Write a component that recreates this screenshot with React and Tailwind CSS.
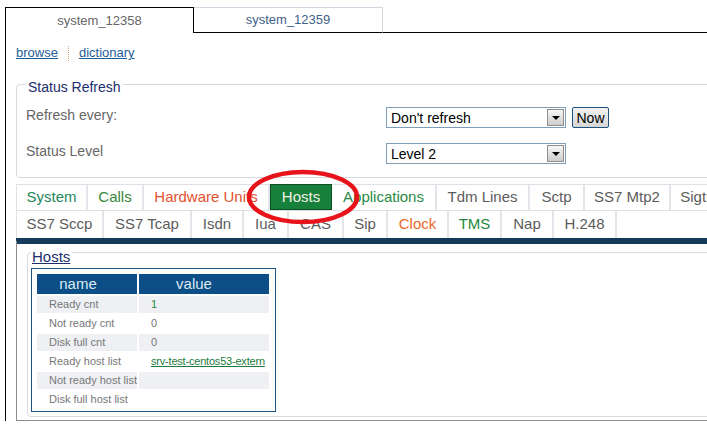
import React from 'react';

const row1 = [
  { label: 'System', w: 'w-[71px]', color: 'text-[#25875a]' },
  { label: 'Calls', w: 'w-[56px]', color: 'text-[#35883a]' },
  { label: 'Hardware Units', w: 'w-[126px]', color: 'text-[#e2512d]' },
  { label: 'Hosts', active: true },
  { label: 'Applications', w: 'w-[105px]', color: 'text-[#2a8a45]' },
  { label: 'Tdm Lines', w: 'w-[93px]', color: 'text-[#5c5c5c]' },
  { label: 'Sctp', w: 'w-[55px]', color: 'text-[#5c5c5c]' },
  { label: 'SS7 Mtp2', w: 'w-[86px]', color: 'text-[#5c5c5c]' },
  { label: 'Sigtran', w: 'w-[68px]', color: 'text-[#5c5c5c]' },
];

const row2 = [
  { label: 'SS7 Sccp', w: 'w-[87px]', color: 'text-[#5c5c5c]' },
  { label: 'SS7 Tcap', w: 'w-[88px]', color: 'text-[#5c5c5c]' },
  { label: 'Isdn', w: 'w-[52px]', color: 'text-[#5c5c5c]' },
  { label: 'Iua', w: 'w-[45px]', color: 'text-[#5c5c5c]' },
  { label: 'CAS', w: 'w-[55px]', color: 'text-[#5c5c5c]' },
  { label: 'Sip', w: 'w-[44px]', color: 'text-[#5c5c5c]' },
  { label: 'Clock', w: 'w-[61px]', color: 'text-[#e8682a]' },
  { label: 'TMS', w: 'w-[53px]', color: 'text-[#23873c]' },
  { label: 'Nap', w: 'w-[52px]', color: 'text-[#5c5c5c]' },
  { label: 'H.248', w: 'w-[63px]', color: 'text-[#5c5c5c]' },
];

const hosts = [
  { name: 'Ready cnt', value: '1', kind: 'green' },
  { name: 'Not ready cnt', value: '0' },
  { name: 'Disk full cnt', value: '0' },
  { name: 'Ready host list', value: 'srv-test-centos53-extern', kind: 'link' },
  { name: 'Not ready host list', value: '' },
  { name: 'Disk full host list', value: '' },
];

function Select({ value }) {
  return (
    <div className="w-[180px] h-[21px] border border-[#7f9db9] bg-white flex items-center">
      <span className="flex-1 pl-[4px] text-[14px] leading-none text-black">{value}</span>
      <span className="w-[17px] h-[17px] mr-[1px] border border-[#8e8e8e] bg-linear-to-b from-[#f7f7f7] to-[#cdcdcd] flex items-center justify-center">
        <span className="w-0 h-0 border-l-[4px] border-r-[4px] border-t-[4px] border-l-transparent border-r-transparent border-t-black" />
      </span>
    </div>
  );
}

function Tab({ tab, h }) {
  if (tab.active) {
    return (
      <div className="w-[62px] h-[26px] -mt-px bg-[#17803a] border border-[#0e4a22] flex items-center justify-center text-[15px] text-[#f3f3e6]">
        {tab.label}
      </div>
    );
  }
  return (
    <div className={`${tab.w} ${h} shrink-0 border-r-2 border-[#e2e5e9] flex items-center justify-center text-[15px] whitespace-nowrap ${tab.color}`}>
      {tab.label}
    </div>
  );
}

export default function App() {
  return (
    <div className="relative w-[707px] h-[428px] overflow-hidden bg-white font-['Liberation_Sans',Arial,sans-serif]">
      <div className="w-[780px] pt-[7px] pl-[5px]">
        {/* system tabs */}
        <div className="flex h-[26px]">
          <div className="w-[189px] border-l border-t border-r border-black flex items-center justify-center text-[13px] text-[#666]">
            system_12358
          </div>
          <div className="w-[189px] border-t border-r border-[#d6d6e2] border-b border-b-black flex items-center justify-center text-[13px] text-[#41618a]">
            system_12359
          </div>
          <div className="flex-1 border-b border-black" />
        </div>

        <div className="border-l border-black pl-[10px]">
          <div className="pt-[12px] flex items-center text-[13px] leading-[16px]">
            <a href="#" className="underline text-[#1f5d96]">browse</a>
            <span className="mx-[10px] h-[15px] border-l border-dotted border-[#d4a373]" />
            <a href="#" className="underline text-[#1f5d96]">dictionary</a>
          </div>

          <fieldset className="mt-[13px] border border-[#d3dae2] rounded-[4px] pl-[9px] pb-[13px]">
            <legend className="px-[2px] pt-[6px] text-[14px] leading-[14px] text-[#1d2d6e]">Status Refresh</legend>
            <div className="mt-[13px] grid grid-cols-[360px_auto] gap-y-[15px] items-center">
              <div className="pb-[5px] text-[14px] leading-[16px] text-[#666]">Refresh every:</div>
              <div className="flex items-center">
                <Select value="Don't refresh" />
                <button className="ml-[6px] w-[37px] h-[21px] border border-[#1c5180] rounded-[2px] bg-linear-to-b from-[#f2f2f2] to-[#d6d6d6] text-[14px] leading-none text-black">
                  Now
                </button>
              </div>
              <div className="pb-[5px] text-[14px] leading-[16px] text-[#666]">Status Level</div>
              <div className="flex items-center">
                <Select value="Level 2" />
              </div>
            </div>
          </fieldset>

          {/* category tabs */}
          <div className="mt-[6px]">
            <div className="flex border-t border-b border-l border-[#dde1e6]">
              {row1.map((t) => (
                <Tab key={t.label} tab={t} h="h-[25px]" />
              ))}
            </div>
            <div className="flex border-l border-[#dde1e6]">
              {row2.map((t) => (
                <Tab key={t.label} tab={t} h="h-[27px]" />
              ))}
            </div>
            <div className="h-[6px] bg-[#163a5a]" />
          </div>

          <div className="border-l border-b border-[#8c8c8c] pl-[10px]">
            <fieldset className="-mt-[3px] mb-[3px] border border-[#d5dce4] rounded-[4px] pl-[3px] pb-[4px]">
              <legend className="pl-[1px] pr-[2px] pt-[8px] text-[15px] leading-[15px] text-[#1d2d6e] underline">Hosts</legend>
              <div className="mt-[4px] w-[245px] border border-[#1d4f7f] px-[5px] pt-[5px] pb-[3px]">
                <div className="grid grid-cols-[100px_130px] gap-[2px]">
                  <div className="h-[20px] bg-[#0b4f86] flex items-center justify-center pr-[18px] text-[15px] text-[#dce8f2]">name</div>
                  <div className="h-[20px] bg-[#0b4f86] flex items-center justify-center pr-[20px] text-[15px] text-[#dce8f2]">value</div>
                  {hosts.map((r, i) => {
                    const bg = i % 2 === 0 ? 'bg-[#eef0f4]' : 'bg-white';
                    return (
                      <React.Fragment key={r.name}>
                        <div className={`h-[17px] ${bg} pl-[12px] flex items-center text-[11px] text-[#777] whitespace-nowrap`}>{r.name}</div>
                        <div className={`h-[17px] ${bg} pl-[12px] flex items-center text-[11px] whitespace-nowrap`}>
                          {r.kind === 'link' ? (
                            <a href="#" className="underline text-[#1e7a3e] tracking-[-0.2px]">{r.value}</a>
                          ) : (
                            <span className={r.kind === 'green' ? 'text-[#2a8a3a]' : 'text-[#777]'}>{r.value}</span>
                          )}
                        </div>
                      </React.Fragment>
                    );
                  })}
                </div>
              </div>
            </fieldset>
          </div>
        </div>
      </div>

      {/* red annotation ellipse around the Hosts tab */}
      <svg className="absolute left-[245px] top-[169px]" width="116" height="56" viewBox="0 0 116 56">
        <ellipse cx="58" cy="28" rx="54" ry="25" fill="none" stroke="#e8141c" strokeWidth="4.5" />
      </svg>
    </div>
  );
}
